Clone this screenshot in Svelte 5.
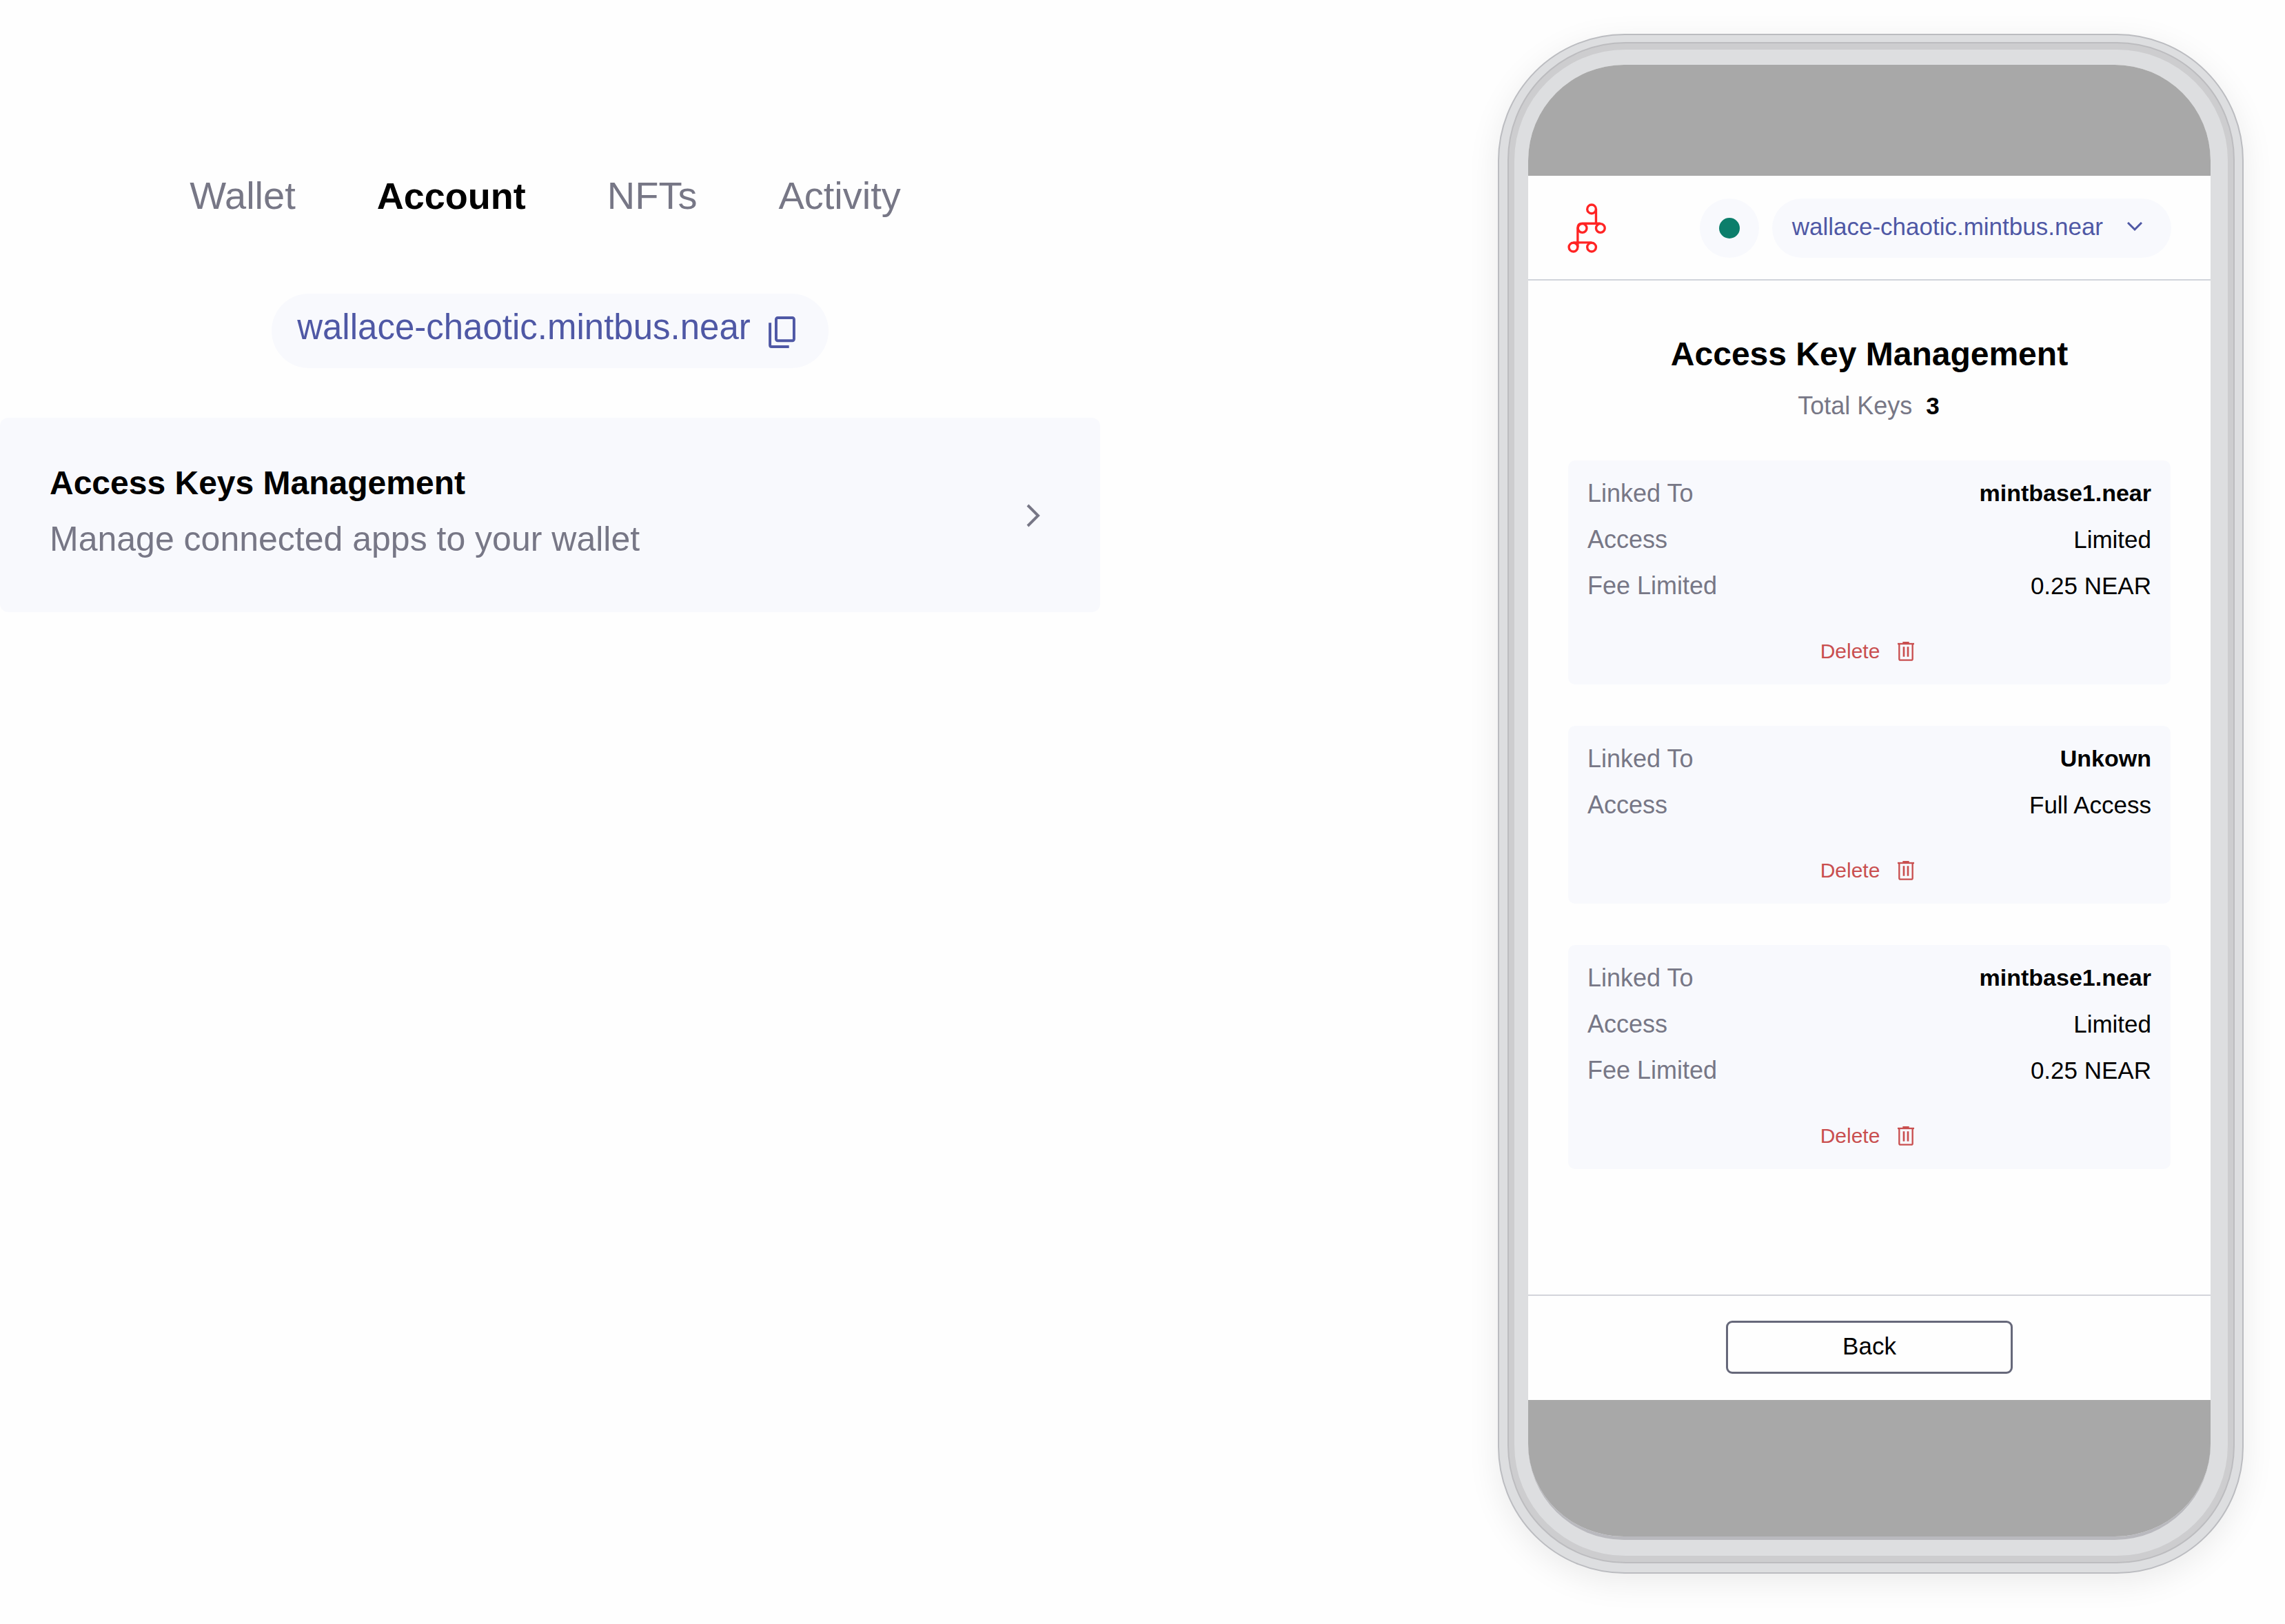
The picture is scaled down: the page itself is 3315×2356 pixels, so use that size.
<script lang="ts">
  const account = 'wallace-chaotic.mintbus.near';
  const tabs = ['Wallet', 'Account', 'NFTs', 'Activity'];
  let active = $state('Account');

  const keys = [
    { linked: 'mintbase1.near', access: 'Limited', fee: '0.25 NEAR' },
    { linked: 'Unkown', access: 'Full Access', fee: '' },
    { linked: 'mintbase1.near', access: 'Limited', fee: '0.25 NEAR' },
  ];
</script>

<div class="page">
  <section class="wallet">
    <nav class="tabs">
      {#each tabs as tab}
        <a href="#{tab}" class:active={tab === active} onclick={() => (active = tab)}>{tab}</a>
      {/each}
    </nav>

    <button class="pill copy" type="button">
      <span>{account}</span>
      <svg class="copy-icon" viewBox="108 78 118 140" fill="none" stroke="currentColor" aria-hidden="true">
        <rect x="141" y="84" width="79" height="101" rx="7" stroke-width="12" />
        <path d="M114 106 V205 Q114 212 121 212 H198" stroke-width="12" />
      </svg>
    </button>

    <a class="manage" href="#keys">
      <span class="manage-text">
        <strong>Access Keys Management</strong>
        <span>Manage connected apps to your wallet</span>
      </span>
      <svg class="next" viewBox="0 0 20 34" fill="none" stroke="currentColor" stroke-width="4" aria-hidden="true">
        <path d="M2 2 L17 17 L2 32" />
      </svg>
    </a>
  </section>

  <section class="stage">
    <div class="shell">
      <div class="ring">
        <div class="bezel">
          <div class="screen">
            <div class="status"></div>

            <header>
              <svg class="logo" viewBox="72 74 166 214" fill="none" stroke="#ff2424" stroke-width="10" aria-hidden="true">
                <circle cx="176" cy="99" r="19" />
                <circle cx="136" cy="181" r="19" />
                <circle cx="214" cy="181" r="19" />
                <circle cx="97" cy="263" r="19" />
                <circle cx="176" cy="263" r="19" />
                <path d="M195 99 V161 M214 161 H136 Q116 161 116 181 V263 M97 243 H176" />
              </svg>
              <div class="controls">
                <span class="online"><i></i></span>
                <button class="pill switcher" type="button">
                  <span>{account}</span>
                  <svg class="down" viewBox="0 0 22 14" fill="none" stroke="currentColor" stroke-width="3" aria-hidden="true">
                    <path d="M1 1 L11 11 L21 1" />
                  </svg>
                </button>
              </div>
            </header>

            <main>
              <h1>Access Key Management</h1>
              <p class="total">Total Keys <b>{keys.length}</b></p>

              <div class="list">
                {#each keys as key}
                  <article>
                    <dl>
                      <div><dt>Linked To</dt><dd class="name">{key.linked}</dd></div>
                      <div><dt>Access</dt><dd>{key.access}</dd></div>
                      {#if key.fee}
                        <div><dt>Fee Limited</dt><dd>{key.fee}</dd></div>
                      {/if}
                    </dl>
                    <button class="delete" type="button">
                      <span>Delete</span>
                      <svg viewBox="0 0 72 84" fill="none" stroke="currentColor" aria-hidden="true">
                        <path d="M0 9 H72" stroke-width="7" />
                        <path d="M22 4 H50" stroke-width="8" />
                        <path d="M7 9 V75 Q7 80 12 80 H60 Q65 80 65 75 V9" stroke-width="7" />
                        <path d="M27 22 V65 M45 22 V65" stroke-width="8" />
                      </svg>
                    </button>
                  </article>
                {/each}
              </div>
            </main>

            <footer>
              <button class="back" type="button">Back</button>
            </footer>

            <div class="home"></div>
          </div>
        </div>
      </div>
    </div>
  </section>
</div>

<style>
  :global(body) {
    background: #fefefe;
  }

  .page {
    display: grid;
    grid-template-columns: 1596fr 1719fr;
    align-items: start;
    font-family: 'Liberation Sans', Arial, sans-serif;
    color: #000;
  }

  button {
    font: inherit;
    border: 0;
    margin: 0;
    cursor: pointer;
  }

  a {
    text-decoration: none;
    color: inherit;
  }

  svg {
    display: block;
    flex: none;
  }

  .wallet {
    display: flex;
    flex-direction: column;
    align-items: center;
    padding-top: 252px;
  }

  .tabs {
    display: flex;
    gap: 118px;
    padding-right: 14px;
    font-size: 56px;
    line-height: 64px;
    color: #777786;
  }

  .tabs .active {
    color: #000;
    font-size: 54px;
    font-weight: 700;
  }

  .pill {
    display: flex;
    align-items: center;
    border-radius: 54px;
    background: #f8f9fd;
    color: #4f58a5;
    white-space: nowrap;
  }

  .copy {
    gap: 26px;
    margin: 110px 0 72px;
    padding: 19px 48px 29px 37px;
    font-size: 51px;
    line-height: 60px;
  }

  .copy-icon {
    align-self: flex-end;
    width: 39px;
    height: 46px;
  }

  .manage {
    display: flex;
    align-items: center;
    justify-content: space-between;
    align-self: stretch;
    padding: 65px 87px 63px 72px;
    border-radius: 12px;
    background: #f8f9fd;
    color: #777786;
    font-size: 50px;
    line-height: 60px;
  }

  .manage-text {
    display: flex;
    flex-direction: column;
    gap: 21px;
    padding-bottom: 13px;
  }

  strong,
  h1 {
    font-size: 48px;
    font-weight: 700;
    color: #000;
  }

  .next {
    width: 20px;
    height: 34px;
  }

  .stage {
    display: flex;
    justify-content: flex-end;
    padding: 49px 60px 74px 0;
  }

  .shell,
  .ring,
  .bezel,
  .screen {
    box-sizing: border-box;
  }

  .shell {
    width: 100%;
    max-width: 1082px;
    padding: 10px 11px 13px 12px;
    border: 2px solid #bbbcc0;
    border-radius: 184px;
    background: #dddee0;
    box-shadow: 0 12px 48px rgba(0, 0, 0, 0.08);
  }

  .ring {
    padding: 9px 8px;
    border: 2px solid #bcbcbf;
    border-radius: 171px;
    background: #cdcdcf;
  }

  .bezel {
    padding: 22px 25px 23px 20px;
    border-radius: 161px;
    background: #dddee0;
  }

  .screen {
    overflow: hidden;
    border-bottom: 5px solid #b9b9be;
    border-radius: 139px;
    background: #fefefe;
  }

  .status {
    height: 161px;
    background: #a8a8a8;
  }

  .home {
    height: 198px;
    background: #a8a8a8;
  }

  header {
    display: flex;
    align-items: center;
    justify-content: space-between;
    padding: 33px 57px 31px;
    border-bottom: 2px solid #d1d4db;
  }

  .logo {
    width: 56px;
    height: 72px;
  }

  .controls {
    display: flex;
    gap: 19px;
  }

  .online {
    display: grid;
    place-items: center;
    width: 86px;
    height: 86px;
    border-radius: 50%;
    background: #f8f9fd;
  }

  .online i {
    width: 30px;
    height: 30px;
    border-radius: 50%;
    background: #0c7e6b;
  }

  .switcher {
    gap: 35px;
    padding: 19px 42px 23px 29px;
    font-size: 35px;
    line-height: 44px;
  }

  .down {
    width: 22px;
    height: 14px;
  }

  main {
    padding: 77px 58px 182px;
  }

  h1 {
    margin: 0 0 23px;
    line-height: 60px;
    text-align: center;
  }

  .total {
    display: flex;
    justify-content: center;
    gap: 20px;
    margin: 0 0 57px;
    padding-right: 2px;
    font-size: 36px;
    line-height: 44px;
    color: #777786;
  }

  .total b {
    font-size: 35px;
    color: #000;
  }

  .list {
    display: grid;
    gap: 60px;
  }

  article {
    display: flex;
    flex-direction: column;
    align-items: center;
    padding: 14px 28px 28px;
    border-radius: 10px;
    background: #f8f9fd;
  }

  dl {
    align-self: stretch;
    margin: 0 0 42px;
  }

  dl div {
    display: flex;
    justify-content: space-between;
    line-height: 67px;
  }

  dt {
    font-size: 36px;
    color: #777786;
  }

  dd {
    margin: 0;
    font-size: 35px;
  }

  dd.name {
    font-size: 34px;
    font-weight: 700;
  }

  .delete {
    display: flex;
    align-items: center;
    gap: 26px;
    padding: 0 6px 0 0;
    background: none;
    color: #c94f4f;
    font-size: 30px;
    line-height: 40px;
  }

  .delete svg {
    width: 24px;
    height: 28px;
  }

  footer {
    display: flex;
    justify-content: center;
    padding: 36px 0 38px;
    border-top: 2px solid #d3d4db;
  }

  .back {
    width: 42%;
    padding: 12px 0 15px;
    border: 3px solid #66687a;
    border-radius: 9px;
    background: #fefefe;
    font-size: 35px;
    line-height: 44px;
    color: #000;
  }
</style>
